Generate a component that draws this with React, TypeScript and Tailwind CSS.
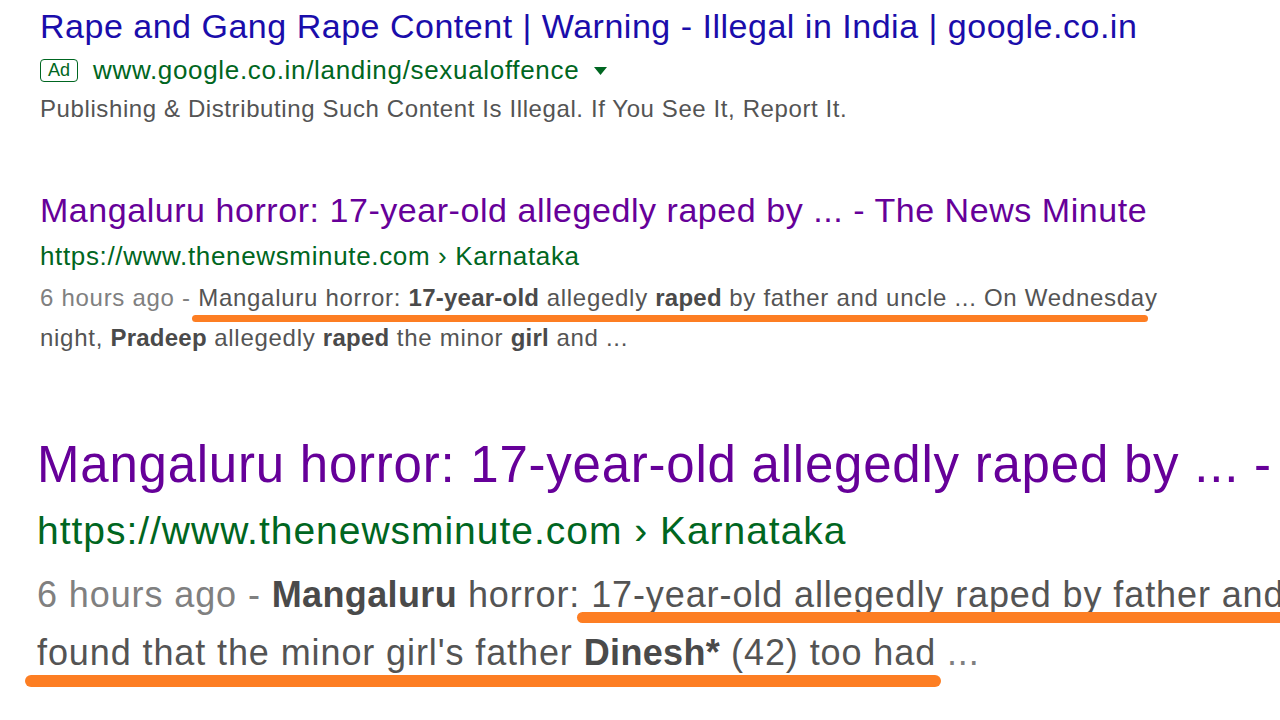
const snippetGray = 'text-[#545454]'
const bold = 'font-bold tracking-[0.01em] text-[#4a4a4a]'

function Underline({ className }: { className: string }) {
  // hand-drawn orange marker lines over the results
  return <div className={`absolute rounded-full bg-[#fd7e23] ${className}`} />
}

export default function App() {
  return (
    <div className="relative w-[1280px] h-[720px] overflow-hidden bg-white font-['Liberation_Sans',Arial,sans-serif] whitespace-nowrap">
      {/* Ad result */}
      <div className="flex flex-col pl-[40px] pt-[6px]">
        <div className="text-[34px] leading-[40px] tracking-[0.015em] text-[#1a0dab]">
          Rape and Gang Rape Content | Warning - Illegal in India | google.co.in
        </div>
        <div className="mt-[8px] flex items-center h-[32px]">
          <span className="flex items-center justify-center w-[38px] h-[23px] rounded-[4px] border-[1.5px] border-[#006621] text-[#006621] text-[18px] leading-none">
            Ad
          </span>
          <span className="ml-[15px] text-[26px] leading-[32px] tracking-[0.026em] text-[#006621]">
            www.google.co.in/landing/sexualoffence
          </span>
          <svg className="ml-[15px] mt-[1px]" width="13" height="8" viewBox="0 0 13 8">
            <path d="M0 0 L13 0 L6.5 8 Z" fill="#006621" />
          </svg>
        </div>
        <div className={`mt-[8px] text-[24px] leading-[30px] tracking-[0.025em] ${snippetGray}`}>
          Publishing &amp; Distributing Such Content Is Illegal. If You See It, Report It.
        </div>
      </div>

      {/* Organic result */}
      <div className="flex flex-col pl-[40px] mt-[66px]">
        <div className="text-[34px] leading-[40px] tracking-[0.016em] text-[#660099]">
          Mangaluru horror: 17-year-old allegedly raped by ... - The News Minute
        </div>
        <div className="mt-[10px] text-[26px] leading-[32px] tracking-[0.025em] text-[#006621]">
          https://www.thenewsminute.com › Karnataka
        </div>
        <div className={`mt-[6px] text-[24px] leading-[40px] tracking-[0.03em] ${snippetGray}`}>
          <div>
            <span className="text-[#808080]">6 hours ago - </span>Mangaluru horror: <b className={bold}>17-year-old</b> allegedly <b className={bold}>raped</b> by father and uncle ... On Wednesday
          </div>
          <div>
            night, <b className={bold}>Pradeep</b> allegedly <b className={bold}>raped</b> the minor <b className={bold}>girl</b> and ...
          </div>
        </div>
      </div>

      {/* Zoomed-in crop of the same result */}
      <div className="flex flex-col pl-[37px] mt-[77px]">
        <div className="text-[51px] leading-[60px] tracking-[0.015em] text-[#660099]">
          Mangaluru horror: 17-year-old allegedly raped by ... - The News Minute
        </div>
        <div className="mt-[13px] text-[39px] leading-[46px] tracking-[0.025em] text-[#006621]">
          https://www.thenewsminute.com › Karnataka
        </div>
        <div className={`mt-[12px] text-[36px] leading-[58px] tracking-[0.025em] ${snippetGray}`}>
          <div>
            <span className="text-[#808080]">6 hours ago - </span><b className={bold}>Mangaluru</b> horror: 17-year-old allegedly raped by father and uncle ...
          </div>
          <div>
            found that the minor girl's father <b className={bold}>Dinesh*</b> (42) too had <span className="text-[#808080]">...</span>
          </div>
        </div>
      </div>

      <Underline className="left-[192px] top-[315px] w-[956px] h-[7px]" />
      <Underline className="left-[577px] top-[612px] w-[720px] h-[11px]" />
      <Underline className="left-[25px] top-[675px] w-[916px] h-[12px]" />
    </div>
  )
}
